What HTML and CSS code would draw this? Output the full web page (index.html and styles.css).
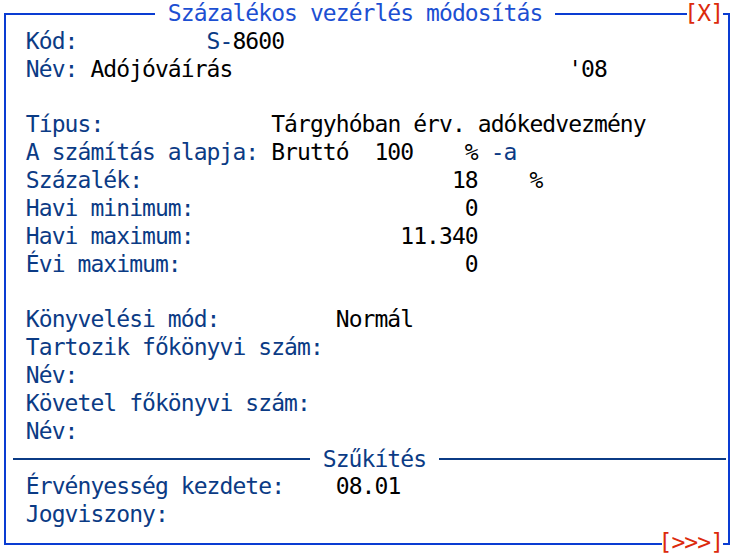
FILE: index.html
```html
<!DOCTYPE html>
<html lang="hu">
<head>
<meta charset="utf-8">
<title>Százalékos vezérlés módosítás</title>
<link rel="stylesheet" href="styles.css">
</head>
<body>
<div class="screen">
<div class="row">            <span class="title"> Százalékos vezérlés módosítás </span>          <span class="hot">[X]</span></div>
<div class="row">  <span class="lbl">Kód:</span>          <span class="lbl">S-</span>8600</div>
<div class="row">  <span class="lbl">Név:</span> Adójóváírás                          '08</div>
<div class="row"></div>
<div class="row">  <span class="lbl">Típus:</span>             Tárgyhóban érv. adókedvezmény</div>
<div class="row">  <span class="lbl">A számítás alapja:</span> Bruttó  100    % <span class="lbl">-a</span></div>
<div class="row">  <span class="lbl">Százalék:</span>                        18    %</div>
<div class="row">  <span class="lbl">Havi minimum:</span>                     0</div>
<div class="row">  <span class="lbl">Havi maximum:</span>                11.340</div>
<div class="row">  <span class="lbl">Évi maximum:</span>                      0</div>
<div class="row"></div>
<div class="row">  <span class="lbl">Könyvelési mód:</span>         Normál</div>
<div class="row">  <span class="lbl">Tartozik főkönyvi szám:</span></div>
<div class="row">  <span class="lbl">Név:</span></div>
<div class="row">  <span class="lbl">Követel főkönyvi szám:</span></div>
<div class="row">  <span class="lbl">Név:</span></div>
<div class="row sep"><span class="sl sl-left"></span><span class="legend"> Szűkítés </span><span class="sl sl-right"></span></div>
<div class="row">  <span class="lbl">Érvényesség kezdete:</span>    08.01</div>
<div class="row">  <span class="lbl">Jogviszony:</span></div>
<div class="row">                                                   <span class="hot">[&gt;&gt;&gt;]</span></div>
</div>
</body>
</html>
```

FILE: styles.css
```css
:root {
  --cw: 12.912px;
  --rh: 27.85px;
  --frame: #0a3cd2;
  --title: #1c4fd2;
  --label: #0b3b85;
  --red: #dc2a0c;
}

html, body {
  margin: 0;
  padding: 0;
  background: #ffffff;
}

.screen {
  position: relative;
  z-index: 0;
  width: 736px;
  height: 557px;
  overflow: hidden;
  background: #ffffff;
  color: #000000;
  font-family: "DejaVu Sans Mono", "Liberation Mono", monospace;
  font-size: 23px;
  letter-spacing: -0.935px;
}

/* outer window frame, drawn behind the text grid */
.screen::before {
  content: "";
  position: absolute;
  z-index: -1;
  left: 4px;
  top: 13px;
  width: 722px;
  height: 528px;
  border: 2px solid var(--frame);
}

.row {
  height: var(--rh);
  line-height: var(--rh);
  white-space: pre;
}

.lbl {
  color: var(--label);
}

.title {
  color: var(--title);
  background: #ffffff;
}

.hot {
  color: var(--red);
  background: linear-gradient(to right, transparent 3px, #ffffff 3px);
}

.sep {
  display: flex;
  align-items: center;
  padding: 0 10px 0 var(--cw);
}

.sl {
  height: 2px;
  background: var(--label);
}

.sl-left {
  width: calc(var(--cw) * 23);
}

.sl-right {
  flex: 1;
}

.legend {
  color: var(--label);
}
```
